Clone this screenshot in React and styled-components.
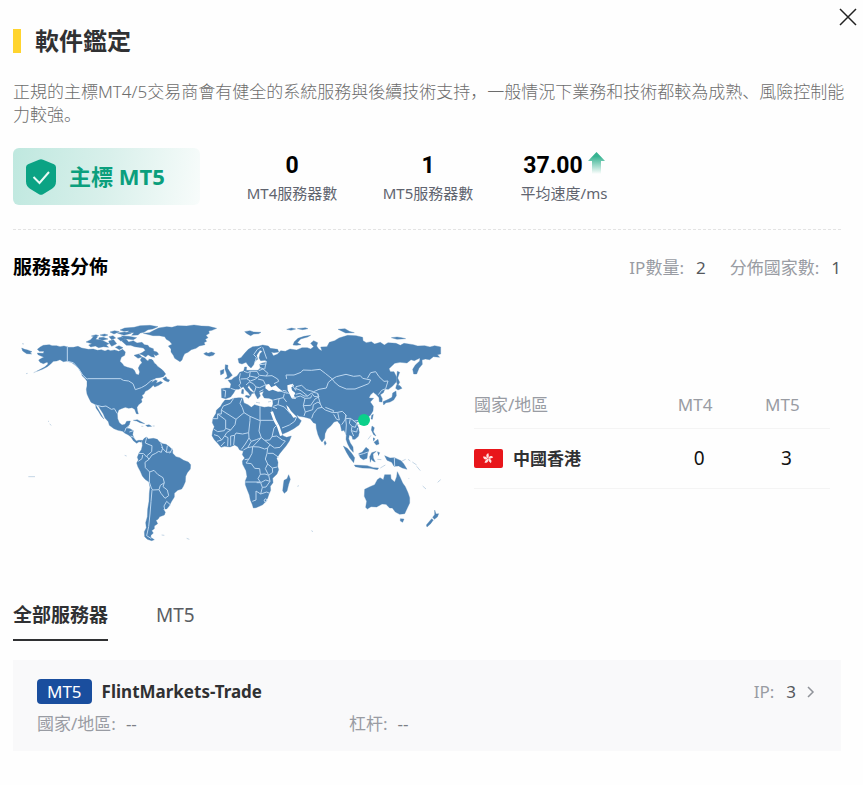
import { useState } from "react";
import styled, { createGlobalStyle } from "styled-components";

const GlobalStyle = createGlobalStyle`
    * {
        box-sizing: border-box;
    }

    body {
        margin: 0;
        background: #fefefe;
        color: #303133;
        font-family: "Noto Sans", "Noto Sans CJK SC", sans-serif;
        font-size: 17px;
        line-height: 23px;
    }

    button {
        font: inherit;
        color: inherit;
        background: none;
        border: 0;
        padding: 0;
        cursor: pointer;
    }
`

const Page = styled.main`
    padding: 0 22px 32px 13px;
`

const TopBar = styled.header`
    display: flex;
    justify-content: space-between;
    align-items: flex-start;
    height: 80px;
    margin-right: -16px;
`

const Title = styled.h1`
    display: flex;
    align-items: center;
    gap: 14px;
    margin: 24px 0 0;
    font-size: 24px;
    font-weight: 700;
    line-height: 34px;

    &::before {
        content: "";
        width: 8px;
        height: 24px;
        background: #ffd42e;
    }
`

const CloseButton = styled.button`
    display: flex;
    padding: 8px 0 8px 8px;
    color: #222;
`

const Intro = styled.p`
    margin: 0 -12px 0 0;
    color: #6c6c6c;
    font-weight: 300;
`

const Summary = styled.section`
    display: flex;
    align-items: center;
    padding: 22px 0 24px;
    border-bottom: 1px dashed #e3e3e3;
`

const License = styled.div`
    display: flex;
    align-items: center;
    gap: 12px;
    width: 187px;
    height: 57px;
    margin-right: 24px;
    padding-left: 12px;
    border-radius: 6px;
    background: linear-gradient(100deg, #bfe8df, #d9f0eb 50%, #f8fcfb);
    color: #0b9f7d;
    font-size: 22px;
    font-weight: 700;
`

const Stat = styled.div`
    display: flex;
    flex-direction: column;
    align-items: center;
    gap: 2px;
    width: 136px;
    padding-top: 4px;
    color: #60646f;
    font-size: 15px;
`

const StatValue = styled.strong`
    display: flex;
    align-items: flex-start;
    gap: 5px;
    color: #000;
    font-family: Roboto, sans-serif;
    font-size: 23px;
    line-height: 28px;
`

const SectionHead = styled.div`
    display: flex;
    justify-content: space-between;
    align-items: center;
    height: 75px;
`

const SectionTitle = styled.h2`
    margin: 0;
    color: #000;
    font-size: 19px;
    font-weight: 700;
`

const Counts = styled.div`
    display: flex;
    gap: 24px;
`

const Label = styled.span`
    color: #999ca3;
`

const Value = styled.span`
    margin-left: 12px;
    color: #55585d;
`

const Distribution = styled.section`
    display: grid;
    grid-template-columns: 437fr 356fr;
    gap: 24px;
    align-items: center;
    padding: 5px 11px 0 0;
`

const Map = styled.svg`
    display: block;
    width: 100%;
`

const CountryTable = styled.table`
    width: 100%;
    margin-top: 10px;
    table-layout: fixed;
    border-collapse: collapse;

    th,
    td {
        padding: 0;
        height: 60px;
        border-bottom: 1px solid #f4f4f4;
        text-align: center;
    }

    th {
        height: 48px;
        padding-right: 8px;
        color: #999ca3;
        font-weight: 400;
    }

    td {
        color: #111;
        font-size: 19px;
    }

    th:first-child,
    td:first-child {
        width: 51%;
        text-align: left;
    }
`

const Country = styled.div`
    display: flex;
    align-items: center;
    gap: 10px;
    color: #303133;
    font-size: 17px;
    font-weight: 700;
`

const Tabs = styled.nav`
    display: flex;
    gap: 48px;
    margin-top: 53px;
`

const Tab = styled.button`
    height: 38px;
    padding-bottom: 12px;
    border-bottom: 2px solid ${({ $active }) => ($active ? "#303133" : "transparent")};
    color: ${({ $active }) => ($active ? "#303133" : "#5a5d63")};
    font-size: 19px;
    font-weight: ${({ $active }) => ($active ? 700 : 400)};
`

const ServerCard = styled.article`
    display: grid;
    grid-template-columns: 312px 1fr auto;
    align-items: center;
    row-gap: 8px;
    margin-top: 19px;
    padding: 19px 26px 16px 24px;
    background: #f9f9fa;
`

const ServerName = styled.h3`
    display: flex;
    align-items: center;
    gap: 10px;
    grid-column: span 2;
    margin: 0;
    font-size: 17px;
    font-weight: 700;
`

const Tag = styled.span`
    padding: 1px 10px;
    border-radius: 4px;
    background: #1a4e9e;
    color: #fff;
    font-weight: 400;
`

const IpButton = styled.button`
    display: flex;
    align-items: center;
    color: #909399;

    svg {
        margin-left: 10px;
    }
`

const Dash = styled.span`
    margin-left: 10px;
    color: #7d8086;
`

function CloseIcon() {
    return (
        <svg width="18" height="18" viewBox="0 0 18 18" fill="none" stroke="currentColor" strokeWidth="1.5">
            <path d="M1 1l16 16M17 1L1 17" />
        </svg>
    );
}

function ShieldIcon() {
    return (
        <svg width="32" height="36" viewBox="0 0 32 36">
            <path d="M14 .7q2-.9 4 0l11 4.5q2 .8 2 3v14q0 5-4 7.500l-9 5.500q-2 1.100-4 0l-9-5.500q-4-2.500-4-7.500v-14q0-2.200 2-3z" fill="#0ba384" />
            <path d="M8.500 18l6 6L24 13" fill="none" stroke="#e9fbf6" strokeWidth="2" />
        </svg>
    );
}

function UpArrow() {
    return (
        <svg width="17" height="22" viewBox="0 0 17 22">
            <defs>
                <linearGradient id="rise" x1="0" y1="0" x2="0" y2="1">
                    <stop offset="0.2" stopColor="#36b391" />
                    <stop offset="1" stopColor="#36b391" stopOpacity="0" />
                </linearGradient>
            </defs>
            <path d="M8.500 0L17 9h-4v13H4V9H0z" fill="url(#rise)" />
        </svg>
    );
}

function HongKongFlag() {
    return (
        <svg width="29" height="19" viewBox="0 0 29 19">
            <rect width="29" height="19" rx="2" fill="#e8161b" />
            <g fill="#ffe3e3">
                {[0, 72, 144, 216, 288].map((angle) => (
                    <path key={angle} transform={`rotate(${angle} 14 9.500)`} d="M14 9.200C11.500 8 11.800 4.800 14.600 4.200C14.200 5.200 15.700 6.800 14 9.200z" />
                ))}
            </g>
        </svg>
    );
}

function WorldMap() {
    return (
        <Map viewBox="9 0 1311 720" role="img" aria-label="服務器分佈">
            <g fill="#4c82b4" stroke="#4c82b4" strokeWidth="1" strokeLinejoin="round">
                {/* North America */}
                <path d="M82 118L92 110 100 106 118 104 126 107 140 107 150 110 162 108 176 112 190 112 204 109 215 114 235 118 250 117 262 121 274 119 285 123 294 119 302 122 314 120 326 124 338 118 346 126 344 136 334 142 330 154 338 162 342 168 352 172 368 176 374 182 378 192 386 195 389 186 385 174 390 164 396 158 391 150 396 141 404 144 412 152 424 148 429 157 437 162 444 170 455 178 461 184 467 192 460 200 448 203 438 204 430 209 424 218 436 210 442 212 438 220 452 214 458 218 446 226 434 231 430 226 422 234 414 240 406 244 402 252 396 256 399 263 394 268 396 276 386 284 381 292 382 301 385 312 379 311 374 298 366 293 356 295 346 292 334 296 326 300 322 312 323 326 328 338 336 345 345 343 350 334 361 333 358 344 352 350 351 355 360 356 370 362 368 374 373 386 379 393 386 391 396 391 394 397 387 395 380 400 370 392 363 381 354 374 345 370 338 364 324 361 312 356 298 346 295 335 285 324 280 312 270 296 266 289 257 284 243 277 236 263 231 252 229 238 231 228 231 214 226 206 217 198 213 186 207 176 196 166 184 157 172 153 160 155 150 149 140 153 130 154 122 162 112 170 97 178 80 184 104 171 114 162 112 156 100 161 90 157 86 150 96 144 102 142 84 134 82 129 100 130 102 124 88 124Z" />
                <path d="M257 285L263 295 270 307 278 321 282 327 274 319 266 305 258 294Z" />
                <path d="M206 168L212 174 221 188 227 197 217 190 210 180Z" />
                <path d="M35 114L44 118 53 120 66 125 60 128 65 132 50 131 38 123Z" />
                <path d="M36 101l6 1M80 184l-9 4M48 191l5-1M114 333l3 2M119 342l5 4M344 436l6 2M55 500h20M455 675l8 1M530 685l8 3" />
                {/* Arctic islands */}
                <path d="M228 96L242 89 250 80 262 81 257 88 276 91 287 96 297 101 289 105 296 112 280 110 266 113 256 108 242 111 236 105 246 101Z" />
                <path d="M244 78l14-4 8 3-9 5zM270 75l14-3 10 3-12 4zM267 83l13-1 14 5-16 4-12-3zM297 80l12-3 8 7-12 5zM296 93l15-4 9 12-15 8-7-9zM322 84l12-3 14 6-16 6zM300 66l14-4 14 3-16 7zM322 69l22-3 20 4-22 6zM316 112l11-5 12 6-11 6z" />
                <path d="M334 92L348 87 356 96 370 92 381 99 396 97 403 104 414 106 418 112 430 116 431 123 441 126 446 133 438 137 431 133 434 142 424 140 414 134 407 141 396 134 388 132 398 127 406 121 400 114 386 112 374 110 362 106 349 106Z" />
                <path d="M330 60L344 54 372 52 390 47 420 46 444 50 428 57 414 59 402 67 391 69 384 75 365 76 372 68 350 68 358 62 342 64Z" />
                <path d="M334 78l22 1 24 4-10 6-28-3zM372 136l14-4 10 9-12 4zM416 147l12 3 5 9-10-3z" />
                {/* Greenland and Iceland */}
                <path d="M400 70L418 68 432 61 446 54 470 50 486 52 502 47 530 48 552 45 574 48 596 49 620 55 606 61 596 63 598 70 588 76 594 83 586 88 590 94 582 98 585 104 568 108 558 115 544 119 534 127 524 131 519 141 516 150 510 155 502 150 494 145 490 136 483 126 483 117 475 108 486 103 479 94 469 88 464 80 448 77 429 77Z" />
                <path d="M581 131L589 127 594 130 604 126 615 130 610 136 598 139 588 136Z" />
                {/* Caribbean and Newfoundland */}
                <path d="M458 206L468 200 471 207 479 210 475 216 465 212ZM370 331L382 329 393 335 404 341 390 338 380 333ZM407 346L417 344 425 349 413 350ZM394 349h6M428 348h6" />
                {/* South America */}
                <path d="M396 393L403 385 410 381 415 387 430 385 442 388 448 395 458 401 468 403 480 412 488 420 488 430 498 440 509 443 521 451 535 456 542 464 541 477 532 488 527 499 526 515 520 529 515 537 503 541 493 550 493 561 485 574 477 589 470 597 460 597 466 607 463 615 449 620 444 628 438 631 443 641 433 648 433 656 425 662 430 669 423 676 422 682 433 689 425 692 412 688 404 680 403 665 409 653 407 638 412 620 413 598 417 574 418 550 420 532 417 516 405 508 397 498 391 484 384 471 380 459 385 450 382 442 387 429 394 419 397 407Z" />
                <g transform="translate(570 0)">
                    {/* Africa */}
                    <path d="M75 270L88 270 101 265 117 263 128 264 132 279 144 284 154 292 164 284 178 289 193 292 205 290 216 292 214 303 222 322 230 336 235 350 242 366 250 378 260 382 274 378 268 393 258 408 248 420 239 431 230 445 234 457 233 469 236 479 231 492 218 505 219 518 211 529 212 541 207 552 203 564 196 576 188 584 180 588 168 593 160 594 157 584 151 570 148 555 142 540 136 524 136 512 141 500 138 482 128 463 127 453 134 444 127 434 130 423 119 420 113 410 104 405 90 411 74 409 63 412 53 400 43 389 36 377 38 364 43 350 37 338 39 325 48 310 49 301 62 289 67 280Z" />
                    <path d="M266 494L271 508 266 523 261 543 253 550 248 542 250 525 252 511 261 506ZM292 529l5-2M334 662l5 3M375 392l4 8-4 6-3-8z" />
                    {/* Eurasia */}
                    <path d="M64 236L78 234 90 235 93 222 84 211 95 209 101 203 111 198 119 187 131 183 134 171 140 171 139 181 158 181 174 181 181 174 179 163 187 159 200 157 196 151 182 152 177 144 180 131 187 124 180 121 170 136 173 148 164 154 161 164 153 174 146 168 138 157 126 162 117 159 114 146 123 143 134 130 145 118 158 110 174 109 188 105 205 108 211 115 233 118 236 126 222 128 214 126 220 137 232 133 242 122 256 124 270 117 290 120 306 113 322 113 332 117 341 110 332 100 341 92 353 98 350 108 357 118 366 123 362 111 381 110 388 97 404 92 417 84 443 76 468 77 488 82 489 92 499 98 514 95 524 102 541 97 553 105 564 98 588 100 601 106 612 100 640 104 653 108 674 107 690 111 704 107 722 111 722 132 712 134 719 142 700 140 689 149 676 147 666 150 667 163 657 175 650 192 641 192 638 178 646 165 659 153 660 144 643 152 633 149 621 159 600 157 584 160 567 176 571 185 582 185 590 202 588 217 577 229 565 238 555 237 550 248 541 254 547 266 546 276 538 275 537 263 530 255 520 247 511 255 507 264 521 265 511 276 520 289 519 303 511 316 501 324 490 334 477 333 469 338 475 352 478 367 475 379 465 388 458 388 456 379 448 375 446 386 451 399 459 411 460 427 451 417 443 402 438 388 439 375 432 361 425 363 421 344 412 333 402 336 393 347 381 358 375 371 374 385 366 396 360 388 354 374 349 355 348 341 340 338 331 326 312 321 297 319 290 314 294 323 304 332 297 345 281 356 264 365 248 372 242 368 238 353 227 333 215 307 215 294 219 282 218 269 207 265 193 264 187 254 191 244 178 248 181 258 173 267 167 256 162 245 151 233 147 226 143 232 151 242 162 249 155 251 152 259 145 248 137 241 130 230 116 238 107 238 101 249 92 261 77 266 65 263Z" />
                    <path d="M76 164L84 166 83 175 90 186 97 196 86 205 74 207 82 199 79 188 75 178ZM61 182L72 178 71 190 62 195ZM138 256l13 2-5 7-11-6zM126 238l5 1-1 13-6-2zM168 277l12 2M204 276l9-2" />
                    <path d="M279 105L283 95 294 85 312 79 332 76 323 81 302 87 292 98 303 104 290 106ZM134 65l16-3 11 4 22 1-7 4-15 1-9 5-11-6zM260 58l15-4 12 3-14 4zM292 56l24-3 8 3-16 3zM414 58l21-2 13 8 15 4-26 1zM574 83l17-2 14 2 12 3-26 2z" />
                    <path d="M592 184L599 187 593 204 599 217 593 228 589 213ZM590 224L600 227 606 235 594 240 587 235ZM588 243L589 257 581 270 570 276 558 278 551 285 549 275 565 268 576 262 578 249ZM515 316l5-3-3 15-4-1zM473 343h9" />
                    {/* South East Asia and Pacific */}
                    <path d="M430 408L442 415 455 430 464 443 461 458 449 443 440 428ZM463 465L480 466 502 467 520 473 536 474 532 479 510 475 487 474 466 470ZM476 431L487 426 498 412 507 419 503 430 501 445 490 449 481 443ZM515 428L529 424 519 432 520 444 526 456 519 453 514 447 511 457 509 440ZM516 348l7 5-3 12 8 13-7-4-7-14zM522 397l12-9 3 14-8 3zM519 383l6 3-5 8M504 388l9-12M532 425l7 3-4 9M532 448l12 1M541 474l15-9" />
                    <path d="M554 437L570 444 583 443 603 452 611 461 621 478 607 474 596 468 582 469 575 457 561 451ZM602 455l15-7M624 448l7 5M637 456l13 9M650 469l11 13" fillRule="evenodd" />
                    <path d="M494 538L510 530 524 524 532 509 540 503 550 509 554 494 572 494 573 506 584 516 590 500 592 485 601 503 608 519 616 530 624 548 629 563 629 579 622 594 614 611 599 613 586 606 577 594 569 594 558 583 546 582 530 591 513 590 502 597 497 592 500 574 493 559ZM601 626l11 1-4 10-7-4zM704 600L708 612 716 611 712 621 703 628 698 622 704 614ZM695 626L700 630 692 641 681 651 679 645ZM668 528l10 9M713 517l9-8M626 505l2 2" />
                </g>
            </g>
            <g fill="#fefefe">
                <path d="M766 235L767 224 777 222 784 232 797 226 806 235 818 244 804 245 788 239 777 243ZM832 226L848 221 852 227 844 232 846 241 856 249 852 257 858 267 845 265 838 251 833 240Z" />
                <path d="M829 285L836 292 843 303 854 314 861 321 850 323 842 311 833 299Z" />
            </g>
            <path d="M785 305L794 330 805 350 814 377" fill="none" stroke="#fefefe" strokeWidth="8" />
            <g fill="none" stroke="#bcd7f0" strokeWidth="3" strokeLinejoin="round">
                <path d="M172 108V154M172 154L190 158 206 176 218 195 232 208M232 206H332L340 211 356 213 369 221 376 239 394 233 408 225 423 212 436 208M257 285L276 290 288 288 304 298 313 296 322 311M344 365L348 354 358 349M358 366L370 362M372 382L362 378" />
                <path d="M410 382L406 399 420 405 426 407 425 425 410 438 417 448 426 435 437 430 446 424 454 427 458 414 452 398M454 411L469 427 484 426M472 407L469 427M487 416L479 430M386 430L401 431 410 441M385 454L396 446 398 435M417 448L405 457 406 473 419 486 418 516M419 486L432 481 443 493 459 503 463 518 451 526 447 539 428 540 424 534 418 516M463 518L459 530 472 540 476 557 465 565 453 550 447 539M470 574L462 588 464 598M470 574L482 585M426 540L423 575 420 612 416 650 410 677 424 686" />
                <g transform="translate(570 0)">
                    <path d="M70 288L91 280 101 265M39 326H53V312H64V300L70 288M64 300L108 328 132 308 127 293 120 280 126 265M53 312L77 330 77 355 73 362 53 365 42 358M77 355L92 360 105 344 108 328M132 308L150 319V331M150 319L180 332V289M180 331H222M42 374L55 378 65 390 74 378 84 383 83 408M51 394L65 390M63 408L74 396M74 378L80 368 92 360M92 378L104 376 101 405M92 378L92 407M104 376L108 369 128 372 146 368 150 331M146 368L147 384 136 402 124 418M147 384L154 394 143 413 130 420M154 394L169 389 184 383 177 363 181 332M184 383L194 391 209 390 216 380 222 354 232 344M216 380L230 378 247 390 256 393 240 412 224 414 210 404 194 391M158 410L177 411 194 417M143 413L158 410 156 430 147 447 134 449M158 410L184 383M194 417L203 414 210 404M203 414L201 430 196 447 203 462 196 476M203 430H219L236 442M203 462L217 474 232 471M147 447L138 459 154 461 164 475 179 476 181 493 195 492 206 496 196 476M136 516H181L174 506 181 493M170 518L182 518 197 510 210 514 206 496 218 487 217 474M182 518L187 532 198 531 210 514M168 543L182 552 187 532M168 543V570L157 574M182 552L200 546 209 550M192 570l6-4 3 6-6 5z" />
                    <path d="M68 240L77 242 75 262M92 235L107 240M121 190L118 205 122 220 117 226 123 235M132 184L143 188 151 184 148 201 140 206 122 207M151 184L171 184 178 196 172 203 149 198M140 206L151 213 165 208 172 203M147 215L160 221 168 231 179 233 194 226M148 216L138 225M168 231L163 247M174 207L190 211 198 228M176 182L189 177 204 190 198 198 180 196M180 173L192 177M178 164L199 162M194 178L199 153M166 155L169 142 161 134 172 118 184 111M188 112L194 129 200 146M198 198L216 197 233 207 236 214 222 221M178 245L190 239M240 243L262 250M248 241L259 243M220 270L237 266 250 263 253 251M237 267L234 284 220 289M234 284L253 291 272 312M250 263L260 276M258 244L266 252M246 354L268 345 284 334 290 321M218 291L231 296" />
                    <path d="M260 207L258 195 282 195 303 187 309 180 334 181 360 178 377 191 397 207 385 217 379 234 357 238 341 245 319 239 305 226 288 230 287 241 275 223M287 235L303 242 323 258 312 258 300 250 287 253M323 258L335 249 342 259 357 261 353 250 337 246M276 265L301 258 315 265 332 264 335 256M315 265L310 287 316 306 312 318M310 287L332 286 345 267 356 261M316 306L338 299 340 284 354 276 361 282 366 292 353 295 340 311 335 325M361 282L356 264 353 250M366 292L376 300 398 308 401 302 376 292M398 308L413 307 427 304 438 315 435 330 425 344M401 313L410 328 418 330 413 307M438 315L437 326 451 325 463 333 478 331M437 326L439 345 437 373M451 325L448 340 456 349 466 352 470 340 459 331M456 349L454 362 470 366 473 354M454 362L461 378" />
                    <path d="M397 207L409 200 438 193 461 199 481 197 488 205 512 210 506 221 486 229 465 237 439 237 417 228 402 215 397 207M502 205L512 188 527 185 537 200 552 214 564 213 557 236 545 241 535 254M476 435L490 431 504 426M583 443L584 468" />
                </g>
            </g>
            <circle cx="1062" cy="330" r="18" fill="#0bd08a" />
        </Map>
    );
}

const stats = [
    { value: "0", label: "MT4服務器數" },
    { value: "1", label: "MT5服務器數" },
    { value: "37.00", label: "平均速度/ms", rising: true },
];

const tabs = ["全部服務器", "MT5"];

function App() {
    const [tab, setTab] = useState(tabs[0]);

    return (
        <Page>
            <GlobalStyle />
            <TopBar>
                <Title>軟件鑑定</Title>
                <CloseButton aria-label="關閉"><CloseIcon /></CloseButton>
            </TopBar>
            <Intro>
                正規的主標MT4/5交易商會有健全的系統服務與後續技術支持，一般情況下業務和技術都較為成熟、風險控制能力較強。
            </Intro>
            <Summary>
                <License><ShieldIcon />主標 MT5</License>
                {stats.map((stat) => (
                    <Stat key={stat.label}>
                        <StatValue>{stat.value}{stat.rising && <UpArrow />}</StatValue>
                        {stat.label}
                    </Stat>
                ))}
            </Summary>
            <SectionHead>
                <SectionTitle>服務器分佈</SectionTitle>
                <Counts>
                    <div><Label>IP數量:</Label><Value>2</Value></div>
                    <div><Label>分佈國家數:</Label><Value>1</Value></div>
                </Counts>
            </SectionHead>
            <Distribution>
                <WorldMap />
                <CountryTable>
                    <thead>
                        <tr><th>國家/地區</th><th>MT4</th><th>MT5</th></tr>
                    </thead>
                    <tbody>
                        <tr>
                            <td><Country><HongKongFlag />中國香港</Country></td>
                            <td>0</td>
                            <td>3</td>
                        </tr>
                    </tbody>
                </CountryTable>
            </Distribution>
            <Tabs>
                {tabs.map((name) => (
                    <Tab key={name} $active={name === tab} onClick={() => setTab(name)}>{name}</Tab>
                ))}
            </Tabs>
            <ServerCard>
                <ServerName><Tag>MT5</Tag>FlintMarkets-Trade</ServerName>
                <IpButton>
                    <Label>IP:</Label><Value>3</Value>
                    <svg width="9" height="12" viewBox="0 0 9 12" fill="none" stroke="currentColor" strokeWidth="1.5">
                        <path d="M2 1l5 5-5 5" />
                    </svg>
                </IpButton>
                <div><Label>國家/地區:</Label><Dash>--</Dash></div>
                <div><Label>杠杆:</Label><Dash>--</Dash></div>
            </ServerCard>
        </Page>
    );
}

export default App;
